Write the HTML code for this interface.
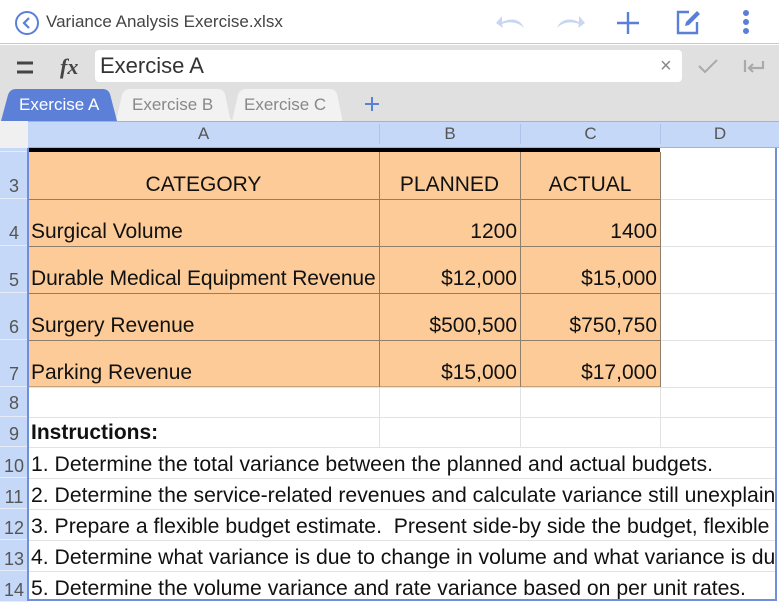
<!DOCTYPE html>
<html><head><meta charset="utf-8"><style>
*{margin:0;padding:0;box-sizing:border-box}
body{width:779px;height:602px;overflow:hidden;background:#fff;font-family:"Liberation Sans",sans-serif;position:relative}
.a{position:absolute}
.t{white-space:nowrap;font-size:21px;color:#111}
.rh{position:absolute;left:0;width:28px;background:#c6d8f7;color:#555;font-size:18px;text-align:center;border-bottom:1px solid #e6ecf7}
.hl{position:absolute;left:28px;right:3px;height:1px;background:#e2e2e2}
.vl{position:absolute;width:1px;background:#e2e2e2}
.in{height:31px;font-size:21.2px;line-height:26px}
</style></head><body>
<div class="a" style="left:0;top:0;width:779px;height:44px;background:#fff;border-bottom:1px solid #c8c8c8"></div>
<svg class="a" style="left:14px;top:10px" width="26" height="26"><circle cx="13" cy="13" r="11" fill="none" stroke="#5a7fd6" stroke-width="2"/><path d="M15 8 L10 13 L15 18" fill="none" stroke="#5a7fd6" stroke-width="2.2"/></svg>
<div class="a" style="left:46px;top:12px;font-size:17px;color:#444">Variance Analysis Exercise.xlsx</div>
<svg class="a" style="left:494px;top:10px" width="34" height="24"><path d="M30 18 C26 8 16 8 8 12 L8 6 L2 13 L9 18 L8 14 C16 11 24 12 30 18Z" fill="#c9d6f1"/></svg>
<svg class="a" style="left:553px;top:10px" width="34" height="24"><path d="M4 18 C8 8 18 8 26 12 L26 6 L32 13 L25 18 L26 14 C18 11 10 12 4 18Z" fill="#c9d6f1"/></svg>
<svg class="a" style="left:616px;top:11px" width="24" height="24"><path d="M12 1V23M1 12H23" stroke="#5a7fd6" stroke-width="2.4"/></svg>
<svg class="a" style="left:676px;top:9px" width="26" height="26"><path d="M13 3H2V24H21V13" fill="none" stroke="#5a7fd6" stroke-width="2.4"/><path d="M9 17L10 13L21 2L24 5L13 16Z" fill="#5a7fd6"/></svg>
<svg class="a" style="left:740px;top:10px" width="12" height="26"><circle cx="6" cy="3" r="3" fill="#5a7fd6"/><circle cx="6" cy="12" r="3" fill="#5a7fd6"/><circle cx="6" cy="21" r="3" fill="#5a7fd6"/></svg>
<div class="a" style="left:0;top:45px;width:779px;height:76px;background:#e0e0e0"></div>
<svg class="a" style="left:17px;top:61px" width="18" height="14"><path d="M0 2H16M0 11H16" stroke="#444" stroke-width="3"/></svg>
<div class="a" style="left:60px;top:54px;font-size:22px;color:#444;font-family:'Liberation Serif',serif;font-style:italic;font-weight:bold">fx</div>
<div class="a" style="left:95px;top:50px;width:587px;height:32px;background:#fff;border-radius:4px"></div>
<div class="a" style="left:100px;top:53px;font-size:22px;color:#333">Exercise A</div>
<div class="a" style="left:660px;top:55px;font-size:20px;color:#888">×</div>
<svg class="a" style="left:697px;top:57px" width="22" height="18"><path d="M2 9L8 15L20 3" fill="none" stroke="#aaa" stroke-width="2"/></svg>
<svg class="a" style="left:743px;top:58px" width="22" height="16"><path d="M2 2V14M20 3V10H6M10 6L6 10L10 14" fill="none" stroke="#aaa" stroke-width="2.2"/></svg>
<svg class="a" style="left:0;top:88px" width="400" height="34">
<path d="M232 33 L238 7 Q240 1 246 1 L330 1 Q335 1 337 6 L342 30 L342 33Z" fill="#f2f2f2"/>
<path d="M116 33 L122 7 Q124 1 130 1 L218 1 Q223 1 225 6 L230 30 L232 33Z" fill="#f2f2f2"/>
<path d="M1 33 L8 7 Q10 1 16 1 L103 1 Q108 1 110 6 L117 33Z" fill="#5c80d8"/>
</svg>
<div class="a" style="left:19px;top:95px;font-size:17px;color:#fff">Exercise A</div>
<div class="a" style="left:132px;top:95px;font-size:17px;color:#888">Exercise B</div>
<div class="a" style="left:244px;top:95px;font-size:17px;color:#888">Exercise C</div>
<svg class="a" style="left:364px;top:96px" width="16" height="16"><path d="M8 1V15M1 8H15" stroke="#5a7fd6" stroke-width="2"/></svg>
<div class="a" style="left:0;top:121px;width:28px;height:27px;background:#f0f0f0"></div>
<div class="a" style="left:28px;top:121px;width:751px;height:27px;background:#c6d8f7;border-top:1px solid #9bb3e6;border-bottom:1px solid #9bb3e6"></div>
<div class="a" style="left:28px;top:124px;width:351px;text-align:center;font-size:17px;color:#555">A</div>
<div class="a" style="left:379px;top:124px;width:141px;text-align:center;font-size:17px;color:#555;border-left:1px solid #aec2ea">B</div>
<div class="a" style="left:520px;top:124px;width:140px;text-align:center;font-size:17px;color:#555;border-left:1px solid #aec2ea">C</div>
<div class="a" style="left:660px;top:124px;width:119px;text-align:center;font-size:17px;color:#555;border-left:1px solid #aec2ea">D</div>
<div class="rh" style="top:148px;height:4px"></div>
<div class="rh" style="top:152px;height:47px;padding-top:24px">3</div>
<div class="rh" style="top:199px;height:47px;padding-top:24px">4</div>
<div class="rh" style="top:246px;height:47px;padding-top:24px">5</div>
<div class="rh" style="top:293px;height:47px;padding-top:24px">6</div>
<div class="rh" style="top:340px;height:47px;padding-top:24px">7</div>
<div class="rh" style="top:387px;height:30px;padding-top:6px">8</div>
<div class="rh" style="top:417px;height:30px;padding-top:7px">9</div>
<div class="rh" style="top:447px;height:31px;padding-top:9px">10</div>
<div class="rh" style="top:478px;height:31px;padding-top:9px">11</div>
<div class="rh" style="top:509px;height:31px;padding-top:9px">12</div>
<div class="rh" style="top:540px;height:31px;padding-top:9px">13</div>
<div class="rh" style="top:571px;height:31px;padding-top:9px">14</div>
<div class="hl" style="top:199px"></div><div class="hl" style="top:246px"></div><div class="hl" style="top:293px"></div><div class="hl" style="top:340px"></div><div class="hl" style="top:387px"></div><div class="hl" style="top:417px"></div><div class="hl" style="top:447px"></div><div class="hl" style="top:478px"></div><div class="hl" style="top:509px"></div><div class="hl" style="top:540px"></div><div class="hl" style="top:571px"></div>
<div class="vl" style="left:379px;top:387px;height:60px"></div><div class="vl" style="left:520px;top:387px;height:60px"></div><div class="vl" style="left:660px;top:152px;height:295px"></div>
<div class="a" style="left:28px;top:152px;width:632px;height:235px;background:#fccb98"></div>
<div class="a" style="left:28px;top:148px;width:632px;height:4px;background:#000"></div>
<div class="a" style="left:28px;top:199px;width:632px;height:1px;background:#8f7f6a"></div>
<div class="a" style="left:28px;top:246px;width:632px;height:1px;background:#8f7f6a"></div>
<div class="a" style="left:28px;top:293px;width:632px;height:1px;background:#8f7f6a"></div>
<div class="a" style="left:28px;top:340px;width:632px;height:1px;background:#8f7f6a"></div>
<div class="a" style="left:28px;top:386px;width:632px;height:1px;background:#c7a27a"></div>
<div class="a" style="left:379px;top:152px;width:1px;height:235px;background:#8f7f6a"></div>
<div class="a" style="left:520px;top:152px;width:1px;height:235px;background:#8f7f6a"></div>
<div class="a" style="left:660px;top:152px;width:1px;height:235px;background:#8f7f6a"></div>
<div class="a t" style="left:28px;top:173px;width:351px;text-align:center">CATEGORY</div>
<div class="a t" style="left:379px;top:173px;width:141px;text-align:center">PLANNED</div>
<div class="a t" style="left:520px;top:173px;width:140px;text-align:center">ACTUAL</div>
<div class="a t" style="left:31px;top:220px">Surgical Volume</div>
<div class="a t" style="left:31px;top:267px;letter-spacing:-0.1px">Durable Medical Equipment Revenue</div>
<div class="a t" style="left:31px;top:314px">Surgery Revenue</div>
<div class="a t" style="left:31px;top:361px">Parking Revenue</div>
<div class="a t" style="left:379px;top:220px;width:138px;text-align:right">1200</div>
<div class="a t" style="left:520px;top:220px;width:137px;text-align:right">1400</div>
<div class="a t" style="left:379px;top:267px;width:138px;text-align:right">$12,000</div>
<div class="a t" style="left:520px;top:267px;width:137px;text-align:right">$15,000</div>
<div class="a t" style="left:379px;top:314px;width:138px;text-align:right">$500,500</div>
<div class="a t" style="left:520px;top:314px;width:137px;text-align:right">$750,750</div>
<div class="a t" style="left:379px;top:361px;width:138px;text-align:right">$15,000</div>
<div class="a t" style="left:520px;top:361px;width:137px;text-align:right">$17,000</div>
<div class="a t" style="left:31px;top:421px;font-weight:bold">Instructions:</div>
<div class="a" style="left:31px;top:452px;width:745px;overflow:hidden">
<div class="t in">1. Determine the total variance between the planned and actual budgets.</div>
<div class="t in">2. Determine the service-related revenues and calculate variance still unexplained</div>
<div class="t in">3. Prepare a flexible budget estimate.&nbsp; Present side-by side the budget, flexible budget</div>
<div class="t in">4. Determine what variance is due to change in volume and what variance is due</div>
<div class="t in">5. Determine the volume variance and rate variance based on per unit rates.</div>
</div>
<div class="a" style="left:27px;top:148px;width:750px;height:453px;border:2px solid #6f8fdc;border-top:none"></div>
</body></html>
